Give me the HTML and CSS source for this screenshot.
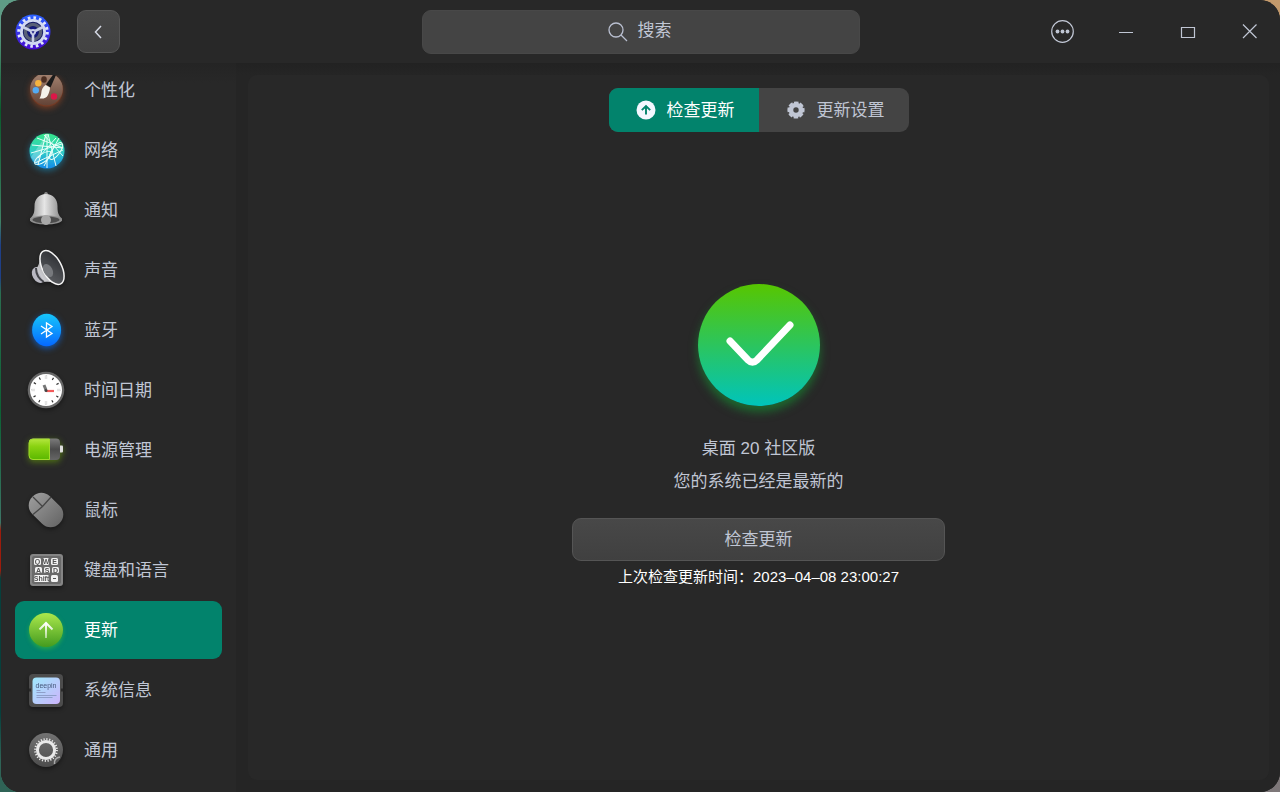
FILE: index.html
```html
<!DOCTYPE html>
<html lang="zh-CN">
<head>
    <meta charset="UTF-8">
    <meta name="viewport" content="width=device-width, initial-scale=1.0">
    <title>控制中心</title>
    <link rel="stylesheet" href="styles.css">
</head>
<body>
    <div class="window">
        <header class="titlebar">
            <div class="titlebar-left">
                <svg class="logo" viewBox="0 0 36 36">
                    <defs>
                        <linearGradient id="logoBg" x1="0" y1="0" x2="0" y2="1">
                            <stop offset="0" stop-color="#2a62ff"/><stop offset="1" stop-color="#4609cf"/>
                        </linearGradient>
                    </defs>
                    <circle cx="18" cy="18" r="17.5" fill="url(#logoBg)"/>
                    <circle cx="18" cy="18" r="14.2" fill="none" stroke="#dfe5fa" stroke-width="3.2" stroke-dasharray="2.6 2.976"/>
                    <circle cx="18" cy="18" r="11.6" fill="#151a66" stroke="#d3daf2" stroke-width="2.8"/>
                    <circle cx="18" cy="18" r="7.6" fill="none" stroke="#596078" stroke-width="3.4"/>
                    <circle cx="18" cy="18" r="5.2" fill="#151a80"/>
                    <path d="M18 18 8 13M18 18l10-5M18 18v11" stroke="#c9cfe6" stroke-width="2.6"/>
                    <circle cx="18" cy="18" r="3" fill="#c9cfe6"/>
                    <path d="M16.5 17.2h3L18 19.8z" fill="#1a1a80"/>
                </svg>
                <button class="back" aria-label="返回">
                    <svg viewBox="0 0 20 20"><path d="M12 4 6.500 10l5.500 6"/></svg>
                </button>
            </div>
            <div class="search">
                <svg viewBox="0 0 20 20"><circle cx="8" cy="8" r="7"/><path d="m13 13 6 6"/></svg>
                <input type="text" placeholder="搜索" aria-label="搜索">
            </div>
            <div class="window-controls">
                <button aria-label="菜单">
                    <svg viewBox="0 0 24 24"><circle cx="11.500" cy="11.500" r="10.800"/><g class="dots"><circle cx="6.500" cy="11.500" r="1.900"/><circle cx="11.500" cy="11.500" r="1.900"/><circle cx="16.500" cy="11.500" r="1.900"/></g></svg>
                </button>
                <button aria-label="最小化">
                    <svg viewBox="0 0 24 24"><path d="M6 12.500h14"/></svg>
                </button>
                <button aria-label="最大化">
                    <svg viewBox="0 0 24 24"><path d="M6.500 7.500h13v10h-13z"/></svg>
                </button>
                <button aria-label="关闭">
                    <svg viewBox="0 0 24 24"><path d="m6 4.500 13.500 13.500M19.500 4.500 6 18"/></svg>
                </button>
            </div>
        </header>

        <div class="main">
            <aside class="sidebar">
                <nav class="menu">
                    <a href="#personalization" class="item">
                        <svg viewBox="0 0 44 44" class="glow-brown">
                            <defs>
                                <linearGradient id="wood" x1="0" y1="0" x2="0" y2="1">
                                    <stop offset="0" stop-color="#a58472"/><stop offset="1" stop-color="#634336"/>
                                </linearGradient>
                            </defs>
                            <circle cx="22.500" cy="22" r="16.500" fill="#743b25"/>
                            <circle cx="22.500" cy="21" r="16.300" fill="url(#wood)"/>
                            <ellipse cx="20" cy="11.500" rx="2.800" ry="3.200" fill="#4d2f22"/>
                            <circle cx="14.300" cy="15.300" r="3.200" fill="#f6b33e"/>
                            <circle cx="11.800" cy="22.300" r="3.200" fill="#54aaf3"/>
                            <circle cx="30" cy="28.500" r="3.200" fill="#db1748"/>
                            <path d="m29.500 6 2.500 1-5.500 12.500-4.500-3z" fill="#1b1b1b"/>
                            <path d="M21.500 17c-3 2-4 5-4.200 8-.2 2-.9 4-1.800 5.500 4 .5 7-.5 8.500-3.500 1-2.500 2-5 2-7.500z" fill="#f5f2ea"/>
                        </svg>
                        <span>个性化</span>
                    </a>
                    <a href="#network" class="item">
                        <svg viewBox="0 0 44 44" class="glow-cyan">
                            <defs>
                                <linearGradient id="net" x1="0" y1="0" x2="0" y2="1">
                                    <stop offset="0" stop-color="#35e68a"/><stop offset=".55" stop-color="#2fc9c9"/><stop offset="1" stop-color="#128bea"/>
                                </linearGradient>
                            </defs>
                            <circle cx="23" cy="23" r="17.500" fill="url(#net)"/>
                            <path d="M23 6 7 29q3 5 7 8l9-31z" fill="#fff" opacity=".25"/>
                            <g fill="none" stroke="#e8fff9" stroke-width="1">
                                <path d="M22 6 14 37M23 6v34M24 6l8 32M20 7l19 21M13 10l26 10M8 17l31 3M7 25l31-9M11 35l28-13M20 38l15-28M32 10 14 30"/>
                                <ellipse cx="32" cy="23" rx="4" ry="10" transform="rotate(35 32 23)"/>
                                <ellipse cx="19" cy="30" rx="10" ry="4" transform="rotate(-35 19 30)"/>
                            </g>
                        </svg>
                        <span>网络</span>
                    </a>
                    <a href="#notification" class="item">
                        <svg viewBox="0 0 44 44" class="shade">
                            <defs>
                                <linearGradient id="bell" x1="0" y1="0" x2="1" y2="0">
                                    <stop offset="0" stop-color="#8e8e8e"/><stop offset=".45" stop-color="#e6e6e6"/><stop offset="1" stop-color="#858585"/>
                                </linearGradient>
                            </defs>
                            <ellipse cx="22" cy="7" rx="2" ry="3" fill="#8b8b8b"/>
                            <path d="M22 6c-7 0-11.500 5-11.500 12 0 6-.5 9-4.500 12.500V33h32v-2.500c-4-3.500-4.500-6.500-4.500-12.500C33.500 11 29 6 22 6z" fill="url(#bell)"/>
                            <ellipse cx="22" cy="32" rx="16" ry="4.500" fill="#8d8d8d"/>
                            <ellipse cx="22" cy="31.800" rx="13.500" ry="3.300" fill="#4c4c4c"/>
                            <circle cx="22" cy="32" r="5" fill="#a8a8a8"/>
                        </svg>
                        <span>通知</span>
                    </a>
                    <a href="#sound" class="item">
                        <svg viewBox="0 0 44 44" class="shade">
                            <defs>
                                <linearGradient id="horn" x1="0" y1="1" x2="1" y2="0">
                                    <stop offset="0" stop-color="#e6e6ea"/><stop offset="1" stop-color="#77777a"/>
                                </linearGradient>
                                <linearGradient id="cone" x1="0" y1="1" x2="1" y2="0">
                                    <stop offset="0" stop-color="#606266"/><stop offset="1" stop-color="#292b2f"/>
                                </linearGradient>
                            </defs>
                            <ellipse cx="14.500" cy="27" rx="6" ry="8.500" transform="rotate(-30 14.500 27)" fill="#b9b8c2"/>
                            <path d="M17 5c-1 8-2 12-4.500 15.500L20 34c5-1 9 0 15 3z" fill="url(#horn)"/>
                            <path d="M12 20c0 6 3 11 8 14" stroke="#44454a" stroke-width="2" fill="none"/>
                            <ellipse cx="28" cy="19.500" rx="9.500" ry="18.500" transform="rotate(-28 28 19.500)" fill="url(#cone)" stroke="#f4f4f4" stroke-width="1.500"/>
                            <ellipse cx="24" cy="22.500" rx="4.500" ry="7" transform="rotate(-28 24 22.500)" fill="#77797d"/>
                        </svg>
                        <span>声音</span>
                    </a>
                    <a href="#bluetooth" class="item">
                        <svg viewBox="0 0 44 44" class="glow-blue">
                            <defs>
                                <linearGradient id="bt" x1="0" y1="0" x2="0" y2="1">
                                    <stop offset="0" stop-color="#16c6fb"/><stop offset="1" stop-color="#0568ff"/>
                                </linearGradient>
                            </defs>
                            <ellipse cx="22.600" cy="22" rx="14.500" ry="16.300" fill="url(#bt)"/>
                            <path d="m17 18 11 7.500-5.500 3.500v-14L28 18.500 17 26" fill="none" stroke="#fff" stroke-width="1.300"/>
                        </svg>
                        <span>蓝牙</span>
                    </a>
                    <a href="#datetime" class="item">
                        <svg viewBox="0 0 44 44" class="shade">
                            <circle cx="22" cy="22" r="18.300" fill="#686868"/>
                            <circle cx="22" cy="22" r="16" fill="#fff"/>
                            <circle cx="22" cy="22" r="13" fill="none" stroke="#333" stroke-width="2.500" stroke-dasharray="1.200 5.607" stroke-dashoffset=".6"/>
                            <path d="M22 7.500v3.500M22 33v3.500M7.500 22H11M33 22h3.500" stroke="#e4e4e4" stroke-width="2.500"/>
                            <path d="m22 22-2-5" stroke="#777" stroke-width="3"/>
                            <path d="M22 23h8" stroke="#f25a5a" stroke-width="2.200"/>
                            <circle cx="22" cy="22.500" r="1.500" fill="#444"/>
                        </svg>
                        <span>时间日期</span>
                    </a>
                    <a href="#power" class="item">
                        <svg viewBox="0 0 44 44" class="glow-lime">
                            <defs>
                                <linearGradient id="charge" x1="0" y1="0" x2="0" y2="1">
                                    <stop offset="0" stop-color="#b3e63e"/><stop offset=".35" stop-color="#8bd312"/><stop offset="1" stop-color="#5bb800"/>
                                </linearGradient>
                                <linearGradient id="cell" x1="0" y1="0" x2="0" y2="1">
                                    <stop offset="0" stop-color="#7b7b7b"/><stop offset=".5" stop-color="#4b4b4b"/><stop offset="1" stop-color="#666"/>
                                </linearGradient>
                            </defs>
                            <path d="M36 17.500h2q1 0 1 1v5q0 1-1 1h-2z" fill="#dedede"/>
                            <rect x="5" y="10.500" width="31" height="21.500" rx="4" fill="url(#cell)"/>
                            <path d="M25.500 11H9q-4 0-4 4v12.500q0 4 4 4h16.500z" fill="url(#charge)" stroke="#a2dc2b" stroke-width="1"/>
                        </svg>
                        <span>电源管理</span>
                    </a>
                    <a href="#mouse" class="item">
                        <svg viewBox="0 0 44 44" class="shade">
                            <defs>
                                <linearGradient id="mouse" x1="0" y1="0" x2="0" y2="1">
                                    <stop offset="0" stop-color="#999"/><stop offset="1" stop-color="#696969"/>
                                </linearGradient>
                            </defs>
                            <rect x="9.500" y="3" width="25" height="38" rx="12" transform="rotate(-45 22 22)" fill="url(#mouse)"/>
                            <path d="m9 26.500 9.500-8L27 9M9 9l9.500 9.500" fill="none" stroke="#454545" stroke-width="1.300"/>
                        </svg>
                        <span>鼠标</span>
                    </a>
                    <a href="#keyboard" class="item">
                        <svg viewBox="0 0 44 44" class="shade">
                            <rect x="6" y="6" width="33" height="32" rx="3" fill="#858585"/>
                            <rect x="8" y="8" width="29" height="28" rx="2" fill="#6a6a6a"/>
                            <g fill="#f3f3f3">
                                <rect x="10" y="10" width="7" height="7" rx="1.500"/><rect x="19" y="10" width="6" height="7" rx="1.500"/><rect x="27" y="10" width="7" height="7" rx="1.500"/>
                                <rect x="11" y="19" width="7" height="6" rx="1.500"/><rect x="20" y="19" width="6" height="6" rx="1.500"/><rect x="28" y="19" width="7" height="6" rx="1.500"/>
                                <rect x="10" y="27" width="15" height="7" rx="1.500"/><rect x="27" y="27" width="7" height="7" rx="1.500"/>
                            </g>
                            <g class="keys" text-anchor="middle">
                                <text x="13.500" y="16">Q</text><text x="22" y="16">W</text><text x="30.500" y="16">E</text>
                                <text x="14.500" y="24.500">A</text><text x="23" y="24.500">S</text><text x="31.500" y="24.500">D</text>
                                <text x="17.500" y="33">Shift</text>
                            </g>
                            <path d="M29 30.500h3" stroke="#555" stroke-width="1"/>
                        </svg>
                        <span>键盘和语言</span>
                    </a>
                    <a href="#update" class="item active" aria-current="page">
                        <svg viewBox="0 0 44 44" class="glow-green">
                            <defs>
                                <linearGradient id="upd" x1="0" y1="0" x2="0" y2="1">
                                    <stop offset="0" stop-color="#abe84c"/><stop offset="1" stop-color="#449b1f"/>
                                </linearGradient>
                                <linearGradient id="stem" gradientUnits="userSpaceOnUse" x1="0" y1="15" x2="0" y2="30">
                                    <stop offset="0" stop-color="#fff"/><stop offset="1" stop-color="#fff" stop-opacity=".5"/>
                                </linearGradient>
                            </defs>
                            <circle cx="22" cy="22" r="17" fill="url(#upd)"/>
                            <path d="M22 15v15M15.500 21.500 22 15l6.500 6.500" fill="none" stroke="url(#stem)" stroke-width="2"/>
                        </svg>
                        <span>更新</span>
                    </a>
                    <a href="#systeminfo" class="item">
                        <svg viewBox="0 0 44 44" class="shade">
                            <defs>
                                <linearGradient id="chip" x1="0" y1="0" x2="1" y2="1">
                                    <stop offset="0" stop-color="#a0e9fc"/><stop offset="1" stop-color="#ccb4fb"/>
                                </linearGradient>
                            </defs>
                            <rect x="5" y="6" width="34" height="33" rx="4" fill="#4c4c4c"/>
                            <path d="M5 20.500h2v3H5zM37 20.500h2v3h-2z" fill="#292929"/>
                            <rect x="8.500" y="9.500" width="27.500" height="26.500" rx="4" fill="url(#chip)"/>
                            <text class="brand" x="22" y="19.500" text-anchor="middle">deepin</text>
                            <path d="M12.500 22.500h4M12.500 24.500h9M12.500 27.500h20M12.500 29.500h16" stroke="#8f9fca" stroke-width="1"/>
                        </svg>
                        <span>系统信息</span>
                    </a>
                    <a href="#general" class="item">
                        <svg viewBox="0 0 44 44" class="shade">
                            <defs>
                                <linearGradient id="gen" x1="0" y1="0" x2="0" y2="1">
                                    <stop offset="0" stop-color="#737373"/><stop offset="1" stop-color="#4c4c4c"/>
                                </linearGradient>
                            </defs>
                            <circle cx="22" cy="22" r="17" fill="url(#gen)"/>
                            <circle cx="22" cy="22" r="8.600" fill="none" stroke="#e9e9e9" stroke-width="3"/>
                            <circle cx="22" cy="22" r="10.900" fill="none" stroke="#e9e9e9" stroke-width="2" stroke-dasharray="1.200 1.654"/>
                            <path d="M30.500 36c-.5-4 1.500-6.500 5.500-7" fill="none" stroke="#aaa" stroke-width="1.500"/>
                        </svg>
                        <span>通用</span>
                    </a>
                </nav>
            </aside>

            <main class="panel">
                <div class="tabs">
                    <button class="tab active">
                        <svg viewBox="0 0 20 20"><circle cx="10" cy="10" r="9.500" fill="#f4f7ff"/><path d="M10 14.500V6.500M5.800 10.200 10 6l4.200 4.200" fill="none" stroke="#02836c" stroke-width="1.900"/></svg>
                        <span>检查更新</span>
                    </button>
                    <button class="tab">
                        <svg viewBox="0 0 20 20">
                            <circle cx="10" cy="10" r="5" fill="none" stroke="#c0c6d4" stroke-width="4.600"/>
                            <circle cx="10" cy="10" r="7.400" fill="none" stroke="#c0c6d4" stroke-width="2.400" stroke-dasharray="4.400 1.412" stroke-dashoffset="2.200"/>
                        </svg>
                        <span>更新设置</span>
                    </button>
                </div>

                <section class="status">
                    <div class="badge">
                        <svg viewBox="0 0 122 122"><path d="M32 57 50 76q4.500 4.500 9 0L92 41"/></svg>
                    </div>
                    <p>桌面 20 社区版</p>
                    <p>您的系统已经是最新的</p>
                    <button class="check">检查更新</button>
                    <p class="last">上次检查更新时间：2023–04–08 23:00:27</p>
                </section>
            </main>
        </div>
    </div>
</body>
</html>
```
FILE: styles.css
```css
* {
    box-sizing: border-box;
}
body {
    margin: 0;
    padding-left: 1px;
    height: 100vh;
    font-family: "Liberation Sans", "Noto Sans CJK SC", sans-serif;
    font-size: 17px;
    color: #c0c6d4;
    /* strip of desktop behind the window */
    background:
        linear-gradient(#c49a6c, #7d7779) right / 50% 100% no-repeat,
        linear-gradient(#5f9c86 0 3%, #0a5a2c 14%, #3f8064 28%, #1f3f86 31% 35%, #2b6e50 37%, #0c6134 52%, #3d7566 66%, #9c1c0c 67% 72%, #06403c 73% 90%, #2f6356 96%);
}
button, input {
    font: inherit;
    color: inherit;
}
button {
    padding: 0;
    border: none;
    background: none;
    cursor: pointer;
}
.window {
    display: flex;
    flex-direction: column;
    height: 100%;
    border-radius: 20px;
    background: #252525;
    overflow: hidden;
}

/* title bar */
.titlebar {
    display: grid;
    grid-template-columns: 1fr minmax(200px, 438px) 1fr;
    align-items: center;
    height: 63px;
    flex-shrink: 0;
    background: #282828;
}
.titlebar-left {
    display: flex;
    align-items: center;
    gap: 26px;
    padding-left: 14px;
}
.logo {
    width: 36px;
    height: 36px;
}
.back {
    display: flex;
    align-items: center;
    justify-content: center;
    width: 43px;
    height: 43px;
    border: 1px solid #555;
    border-radius: 9px;
    background: linear-gradient(#484848, #414141);
}
.back svg {
    width: 20px;
    height: 20px;
    fill: none;
    stroke: #d4d8e4;
    stroke-width: 1.5;
}
.search {
    position: relative;
}
.search input {
    display: block;
    width: 100%;
    height: 44px;
    padding: 0 0 2px 28px;
    border: 1px solid #484848;
    border-radius: 9px;
    outline: none;
    background: #444;
    text-align: center;
}
.search input::placeholder {
    color: #c0c6d4;
    opacity: 1;
}
.search svg {
    position: absolute;
    left: calc(50% - 33px);
    top: 12px;
    width: 20px;
    height: 20px;
    fill: none;
    stroke: #b9bfd0;
    stroke-width: 1.3;
}
.window-controls {
    display: flex;
    justify-content: flex-end;
}
.window-controls button {
    display: flex;
    align-items: center;
    justify-content: center;
    width: 62px;
    height: 62px;
}
.window-controls svg {
    width: 24px;
    height: 24px;
    fill: none;
    stroke: #c0c6d4;
    stroke-width: 1.2;
}
.window-controls .dots {
    fill: #c0c6d4;
    stroke: none;
}

/* body */
.main {
    display: flex;
    flex: 1;
    min-height: 0;
    background: linear-gradient(#222, #252525 12px);
}
.sidebar {
    width: 235px;
    flex-shrink: 0;
    padding-top: 12px;
    background: linear-gradient(#242424, #282828 20px);
}
.menu {
    display: flex;
    flex-direction: column;
    gap: 2px;
    height: 100%;
    padding: 0 14px;
    overflow: hidden;
}
/* the list is scrolled a little */
.item:first-child {
    margin-top: -14px;
}
.item {
    display: flex;
    align-items: center;
    gap: 16px;
    height: 58px;
    flex-shrink: 0;
    padding-left: 9px;
    border-radius: 9px;
    color: inherit;
    text-decoration: none;
}
.item span, .tab span {
    padding-bottom: 3px;
}
.item svg {
    width: 44px;
    height: 44px;
    overflow: visible;
}
.item.active {
    background: #02836c;
    color: #fff;
}
.item .keys {
    font-size: 7px;
    font-weight: bold;
    fill: #555;
}
.item .brand {
    font-size: 7px;
    fill: #46587c;
}
.shade {
    filter: drop-shadow(0 2px 2px rgba(0, 0, 0, 0.4));
}
.glow-brown {
    filter: drop-shadow(0 2px 3px rgba(150, 70, 35, 0.7));
}
.glow-cyan {
    filter: drop-shadow(0 2px 3px rgba(20, 150, 200, 0.6));
}
.glow-blue {
    filter: drop-shadow(0 2px 3px rgba(10, 110, 240, 0.7));
}
.glow-lime {
    filter: drop-shadow(0 2px 3px rgba(120, 190, 0, 0.5));
}
.glow-green {
    filter: drop-shadow(0 2px 2px rgba(60, 190, 50, 0.6));
}
.panel {
    display: flex;
    flex-direction: column;
    align-items: center;
    flex: 1;
    margin: 12px 11px 12px 12px;
    padding-top: 13px;
    border-radius: 9px;
    background: #282828;
}
.tabs {
    display: flex;
    border-radius: 9px;
    background: #444;
    overflow: hidden;
}
.tab {
    display: flex;
    align-items: center;
    justify-content: center;
    gap: 11px;
    width: 150px;
    height: 44px;
    padding-left: 3px;
}
.tab svg {
    width: 20px;
    height: 20px;
}
.tab.active {
    background: #02836c;
    color: #fff;
}
.status {
    display: flex;
    flex-direction: column;
    align-items: center;
    justify-content: center;
    flex: 1;
    width: 100%;
    padding-bottom: 42px;
}
.status p {
    margin: 0;
    line-height: 33px;
}
.badge {
    width: 122px;
    height: 122px;
    margin-bottom: 26px;
    border-radius: 50%;
    background: linear-gradient(#57c600, #00c4bb);
    box-shadow: 0 6px 10px rgba(20, 150, 50, 0.6);
}
.badge svg {
    display: block;
    fill: none;
    stroke: #fff;
    stroke-width: 7;
    stroke-linecap: round;
}
.check {
    width: 373px;
    max-width: 90%;
    height: 43px;
    margin: 20px 0 6px;
    padding-bottom: 3px;
    border: 1px solid #555;
    border-radius: 9px;
    background: linear-gradient(#484848, #404040);
}
.status .last {
    font-size: 15px;
    line-height: 20px;
    color: #fff;
}
```
